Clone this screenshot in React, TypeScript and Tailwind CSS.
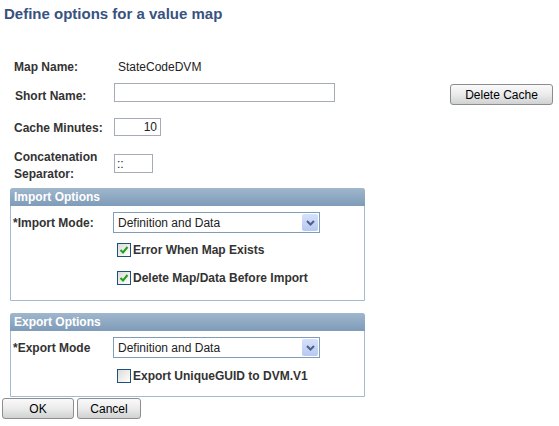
import type { ReactNode } from "react";

function Checkbox({ checked }: { checked?: boolean }) {
  return (
    <span className="flex h-[14px] w-[14px] shrink-0 items-center justify-center border border-[#1c5180] bg-gradient-to-br from-[#dcdcd8] to-white">
      {checked ? (
        <svg width="10" height="10" viewBox="0 0 10 10">
          <path d="M1.5 5 L4 7.5 L8.5 2" fill="none" stroke="#21a121" strokeWidth="2" />
        </svg>
      ) : null}
    </span>
  );
}

function Select({ value }: { value: string }) {
  return (
    <div className="flex h-[21px] w-[207px] items-center justify-between border border-[#7f9db9] bg-white pl-[4px] pr-[1px] text-[12px] text-[#222]">
      <span>{value}</span>
      <span className="flex h-[17px] w-[16px] items-center justify-center rounded-[2px] bg-gradient-to-b from-[#d6e1fb] to-[#b7c9f2]">
        <svg width="9" height="6" viewBox="0 0 9 6">
          <path d="M1 1 L4.5 4.5 L8 1" fill="none" stroke="#4d6185" strokeWidth="2" />
        </svg>
      </span>
    </div>
  );
}

function Button({ children, className }: { children: ReactNode; className?: string }) {
  return (
    <button
      type="button"
      className={
        "flex h-[21px] items-center justify-center rounded-[3px] border border-[#8d8d8d] bg-gradient-to-b from-[#fafafa] via-[#ebebeb] to-[#cfd1d3] text-[12px] text-black " +
        (className ?? "")
      }
    >
      {children}
    </button>
  );
}

function Group({ title, children, className }: { title: string; children: ReactNode; className?: string }) {
  return (
    <div className={"ml-[10px] w-[355px] rounded-t-[3px] border border-[#a3bad3] " + (className ?? "")}>
      <div className="-mx-px -mt-px flex h-[18px] items-center rounded-t-[3px] bg-gradient-to-b from-[#a0b7cd] to-[#7e9bb8] pl-[4px] text-[12px] font-bold text-white">
        {title}
      </div>
      {children}
    </div>
  );
}

export default function App() {
  return (
    <div className="h-[426px] w-[559px] overflow-hidden bg-white font-['Liberation_Sans',Arial,sans-serif] text-[#333]">
      <h1 className="pl-[4px] pt-[4px] text-[15px] font-bold leading-[20px] text-[#38527f]">
        Define options for a value map
      </h1>

      <div className="mt-[35px] flex h-[16px] items-center text-[12px]">
        <span className="w-[118px] pl-[14px] font-bold">Map Name:</span>
        <span className="text-[#222]">StateCodeDVM</span>
      </div>

      <div className="mt-[8px] flex h-[21px] items-start text-[12px]">
        <span className="w-[114px] pl-[15px] pt-[5px] font-bold leading-[16px]">Short Name:</span>
        <input className="h-[19px] w-[221px] border border-[#a5acb5] outline-none" />
        <Button className="ml-[115px] mt-[1px] w-[103px]">Delete Cache</Button>
      </div>

      <div className="mt-[14px] flex h-[18px] items-start text-[12px]">
        <span className="w-[114px] pl-[14px] pt-[2px] font-bold leading-[16px]">Cache Minutes:</span>
        <div className="flex h-[18px] w-[47px] items-center justify-end border border-[#a5acb5] pr-[3px] text-[#222]">
          10
        </div>
      </div>

      <div className="mt-[13px] flex h-[34px] items-start text-[12px]">
        <span className="w-[114px] pl-[14px] font-bold leading-[17px]">
          Concatenation
          <br />
          Separator:
        </span>
        <div className="mt-[5px] flex h-[19px] w-[39px] items-center border border-[#a5acb5] pl-[2px] text-[#222]">
          ::
        </div>
      </div>

      <Group title="Import Options" className="mt-[5px] h-[113px]">
        <div className="mt-[6px] flex h-[21px] items-center text-[12px]">
          <span className="w-[102px] pl-[2px] font-bold">*Import Mode:</span>
          <Select value="Definition and Data" />
        </div>
        <div className="ml-[106px] mt-[10px] flex h-[14px] items-center gap-[2px] text-[12px] font-bold">
          <Checkbox checked />
          <span>Error When Map Exists</span>
        </div>
        <div className="ml-[106px] mt-[14px] flex h-[14px] items-center gap-[2px] text-[12px] font-bold">
          <Checkbox checked />
          <span>Delete Map/Data Before Import</span>
        </div>
      </Group>

      <Group title="Export Options" className="mt-[12px] h-[84px]">
        <div className="mt-[6px] flex h-[21px] items-center text-[12px]">
          <span className="w-[102px] pl-[2px] font-bold">*Export Mode</span>
          <Select value="Definition and Data" />
        </div>
        <div className="ml-[106px] mt-[11px] flex h-[14px] items-center gap-[2px] text-[12px] font-bold">
          <Checkbox />
          <span>Export UniqueGUID to DVM.V1</span>
        </div>
      </Group>

      <div className="ml-[2px] mt-[1px] flex gap-[3px]">
        <Button className="w-[72px]">OK</Button>
        <Button className="w-[64px]">Cancel</Button>
      </div>
    </div>
  );
}
